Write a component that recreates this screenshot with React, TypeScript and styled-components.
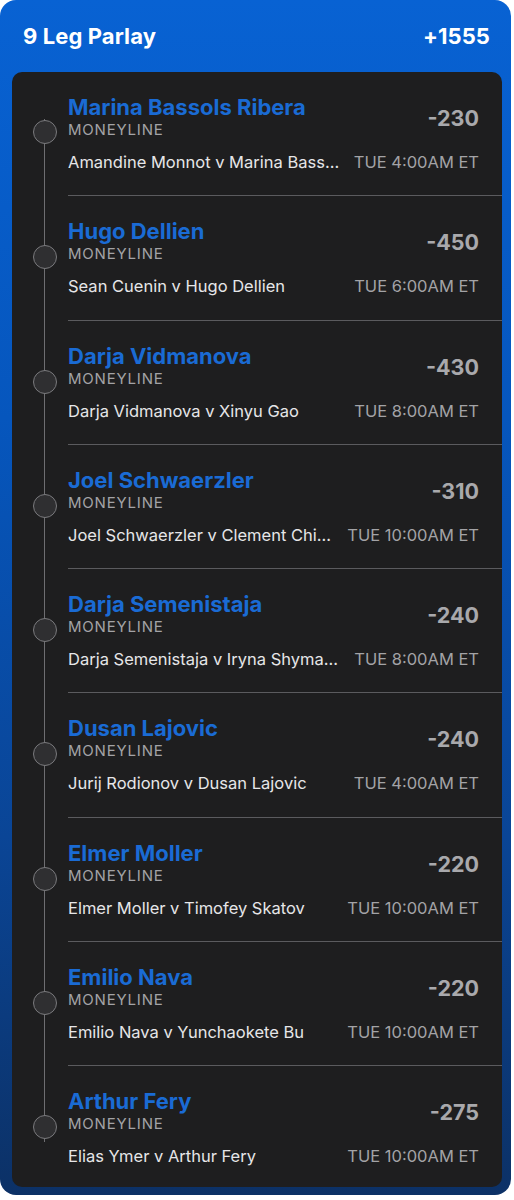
import React from "react";
import styled, { createGlobalStyle } from "styled-components";

const Global = createGlobalStyle`
  html, body { margin: 0; padding: 0; background: #ffffff; }
  body { font-family: Inter, "Noto Sans", "Liberation Sans", sans-serif; -webkit-font-smoothing: antialiased; }
`;

type Leg = { name: string; matchup: string; odds: string; time: string };

const legs: Leg[] = [
  { name: "Marina Bassols Ribera", matchup: "Amandine Monnot v Marina Bassols Ribera", odds: "-230", time: "TUE 4:00AM ET" },
  { name: "Hugo Dellien", matchup: "Sean Cuenin v Hugo Dellien", odds: "-450", time: "TUE 6:00AM ET" },
  { name: "Darja Vidmanova", matchup: "Darja Vidmanova v Xinyu Gao", odds: "-430", time: "TUE 8:00AM ET" },
  { name: "Joel Schwaerzler", matchup: "Joel Schwaerzler v Clement Chidekh", odds: "-310", time: "TUE 10:00AM ET" },
  { name: "Darja Semenistaja", matchup: "Darja Semenistaja v Iryna Shymanovich", odds: "-240", time: "TUE 8:00AM ET" },
  { name: "Dusan Lajovic", matchup: "Jurij Rodionov v Dusan Lajovic", odds: "-240", time: "TUE 4:00AM ET" },
  { name: "Elmer Moller", matchup: "Elmer Moller v Timofey Skatov", odds: "-220", time: "TUE 10:00AM ET" },
  { name: "Emilio Nava", matchup: "Emilio Nava v Yunchaokete Bu", odds: "-220", time: "TUE 10:00AM ET" },
  { name: "Arthur Fery", matchup: "Elias Ymer v Arthur Fery", odds: "-275", time: "TUE 10:00AM ET" },
];

const Card = styled.div`
  width: 511px;
  height: 1195px;
  box-sizing: border-box;
  border-radius: 16px;
  background: linear-gradient(180deg, #0862d3 0%, #0656bd 35%, #0a4596 70%, #0c3166 100%);
  padding: 0 9px 8px 12px;
  display: flex;
  flex-direction: column;
`;

const Header = styled.div`
  height: 72px;
  display: flex;
  align-items: center;
  justify-content: space-between;
  padding: 0 12px 0 11px;
  color: #ffffff;
  font-size: 22px;
  font-weight: 700;
  letter-spacing: 0.1px;
`;

const Panel = styled.div`
  flex: 1;
  min-height: 0;
  background: #1e1e1f;
  border-radius: 10px;
  display: flex;
  flex-direction: column;
`;

const LegRow = styled.div`
  display: grid;
  grid-template-columns: 56px minmax(0, 1fr);
`;

const Gutter = styled.div<{ $first: boolean; $last: boolean }>`
  position: relative;
  &::before {
    content: "";
    position: absolute;
    left: 32px;
    width: 1px;
    background: #6e6e71;
    top: ${(p) => (p.$first ? "47px" : "0")};
    ${(p) => (p.$last ? "height: 76px;" : "bottom: 0;")}
  }
`;

const Dot = styled.div<{ $top: number }>`
  position: absolute;
  left: 21px;
  top: ${(p) => p.$top}px;
  width: 22px;
  height: 22px;
  border-radius: 50%;
  background: #2f2f31;
  border: 1px solid #7a7a7d;
`;

const Body = styled.div<{ $last: boolean }>`
  min-width: 0;
  padding: ${(p) => (p.$last ? "22px 23px 20px 0" : "22px 23px 22.25px 0")};
  border-bottom: ${(p) => (p.$last ? "none" : "1px solid #5b5b5e")};
  display: flex;
  flex-direction: column;
  gap: 11px;
`;

const TopLine = styled.div`
  display: flex;
  align-items: center;
  justify-content: space-between;
  gap: 12px;
`;

const Names = styled.div`
  display: flex;
  flex-direction: column;
  min-width: 0;
`;

const Player = styled.div`
  color: #1a6bd4;
  font-size: 22px;
  font-weight: 700;
  line-height: 26px;
  white-space: nowrap;
`;

const Market = styled.div`
  color: #a3a3a6;
  font-size: 15px;
  letter-spacing: 0.8px;
  line-height: 20px;
`;

const Odds = styled.div`
  color: #a9a9ac;
  font-size: 21.5px;
  font-weight: 700;
  line-height: 28px;
  margin-top: 2px;
  flex-shrink: 0;
`;

const BottomLine = styled.div`
  display: flex;
  align-items: center;
  justify-content: space-between;
  gap: 12px;
  line-height: 22px;
  font-size: 16.5px;
`;

const Matchup = styled.div`
  color: #e6e6e8;
  white-space: nowrap;
  overflow: hidden;
  text-overflow: ellipsis;
  min-width: 0;
`;

const Time = styled.div`
  color: #a3a3a6;
  white-space: nowrap;
  flex-shrink: 0;
`;

export default function App() {
  return (
    <>
      <Global />
      <Card>
        <Header>
          <span>9 Leg Parlay</span>
          <span>+1555</span>
        </Header>
        <Panel>
          {legs.map((leg, i) => {
            const first = i === 0;
            const last = i === legs.length - 1;
            return (
              <LegRow key={i}>
                <Gutter $first={first} $last={last}>
                  <Dot $top={first ? 48 : 49} />
                </Gutter>
                <Body $last={last}>
                  <TopLine>
                    <Names>
                      <Player>{leg.name}</Player>
                      <Market>MONEYLINE</Market>
                    </Names>
                    <Odds>{leg.odds}</Odds>
                  </TopLine>
                  <BottomLine>
                    <Matchup>{leg.matchup}</Matchup>
                    <Time>{leg.time}</Time>
                  </BottomLine>
                </Body>
              </LegRow>
            );
          })}
        </Panel>
      </Card>
    </>
  );
}
